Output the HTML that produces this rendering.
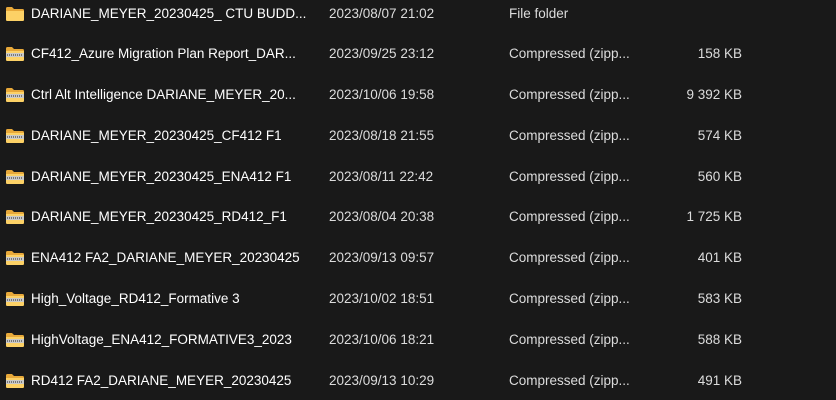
<!DOCTYPE html>
<html><head><style>
body{margin:0;width:836px;height:400px;background:#191919;overflow:hidden;font-family:"Liberation Sans",sans-serif;font-size:13.5px;color:#fff;position:relative}
.r{position:absolute;left:0;width:836px;height:20px;line-height:20px}
.r svg{position:absolute;left:6px;top:3px}
.n{position:absolute;left:31px;white-space:nowrap}
.d{position:absolute;left:329px;color:#dcdcdc}
.t{position:absolute;left:509px;color:#dcdcdc}
.s{position:absolute;right:94px;color:#dcdcdc}
</style></head><body>
<svg width="0" height="0" style="position:absolute"><defs>
<symbol id="f" viewBox="0 0 18 14"><path d="M0 1.5Q0 0 1.5 0H6l2 2h8.5Q18 2 18 3.5V12.5Q18 14 16.5 14H1.5Q0 14 0 12.5Z" fill="#e8a93a"/><path d="M0 4h18v8.5Q18 14 16.5 14H1.5Q0 14 0 12.5Z" fill="#fcd166"/></symbol>
<symbol id="z" viewBox="0 0 18 14"><path d="M0 1.5Q0 0 1.5 0H6l2 2h8.5Q18 2 18 3.5V12.5Q18 14 16.5 14H1.5Q0 14 0 12.5Z" fill="#e8a93a"/><path d="M0 4h18v8.5Q18 14 16.5 14H1.5Q0 14 0 12.5Z" fill="#fcd166"/><rect x="0" y="6" width="18" height="4" fill="#c9c9c9"/><path d="M1 8h16" stroke="#777" stroke-dasharray="1 1" stroke-width="2"/></symbol>
</defs></svg>
<div class="r" style="top:4px"><svg width="18" height="14"><use href="#f"/></svg><span class="n">DARIANE_MEYER_20230425_ CTU BUDD...</span><span class="d">2023/08/07 21:02</span><span class="t">File folder</span></div>
<div class="r" style="top:44px"><svg width="18" height="14"><use href="#z"/></svg><span class="n">CF412_Azure Migration Plan Report_DAR...</span><span class="d">2023/09/25 23:12</span><span class="t">Compressed (zipp...</span><span class="s">158 KB</span></div>
<div class="r" style="top:85px"><svg width="18" height="14"><use href="#z"/></svg><span class="n">Ctrl Alt Intelligence DARIANE_MEYER_20...</span><span class="d">2023/10/06 19:58</span><span class="t">Compressed (zipp...</span><span class="s">9 392 KB</span></div>
<div class="r" style="top:126px"><svg width="18" height="14"><use href="#z"/></svg><span class="n">DARIANE_MEYER_20230425_CF412 F1</span><span class="d">2023/08/18 21:55</span><span class="t">Compressed (zipp...</span><span class="s">574 KB</span></div>
<div class="r" style="top:167px"><svg width="18" height="14"><use href="#z"/></svg><span class="n">DARIANE_MEYER_20230425_ENA412 F1</span><span class="d">2023/08/11 22:42</span><span class="t">Compressed (zipp...</span><span class="s">560 KB</span></div>
<div class="r" style="top:207px"><svg width="18" height="14"><use href="#z"/></svg><span class="n">DARIANE_MEYER_20230425_RD412_F1</span><span class="d">2023/08/04 20:38</span><span class="t">Compressed (zipp...</span><span class="s">1 725 KB</span></div>
<div class="r" style="top:248px"><svg width="18" height="14"><use href="#z"/></svg><span class="n">ENA412 FA2_DARIANE_MEYER_20230425</span><span class="d">2023/09/13 09:57</span><span class="t">Compressed (zipp...</span><span class="s">401 KB</span></div>
<div class="r" style="top:289px"><svg width="18" height="14"><use href="#z"/></svg><span class="n">High_Voltage_RD412_Formative 3</span><span class="d">2023/10/02 18:51</span><span class="t">Compressed (zipp...</span><span class="s">583 KB</span></div>
<div class="r" style="top:330px"><svg width="18" height="14"><use href="#z"/></svg><span class="n">HighVoltage_ENA412_FORMATIVE3_2023</span><span class="d">2023/10/06 18:21</span><span class="t">Compressed (zipp...</span><span class="s">588 KB</span></div>
<div class="r" style="top:371px"><svg width="18" height="14"><use href="#z"/></svg><span class="n">RD412 FA2_DARIANE_MEYER_20230425</span><span class="d">2023/09/13 10:29</span><span class="t">Compressed (zipp...</span><span class="s">491 KB</span></div>
</body></html>
